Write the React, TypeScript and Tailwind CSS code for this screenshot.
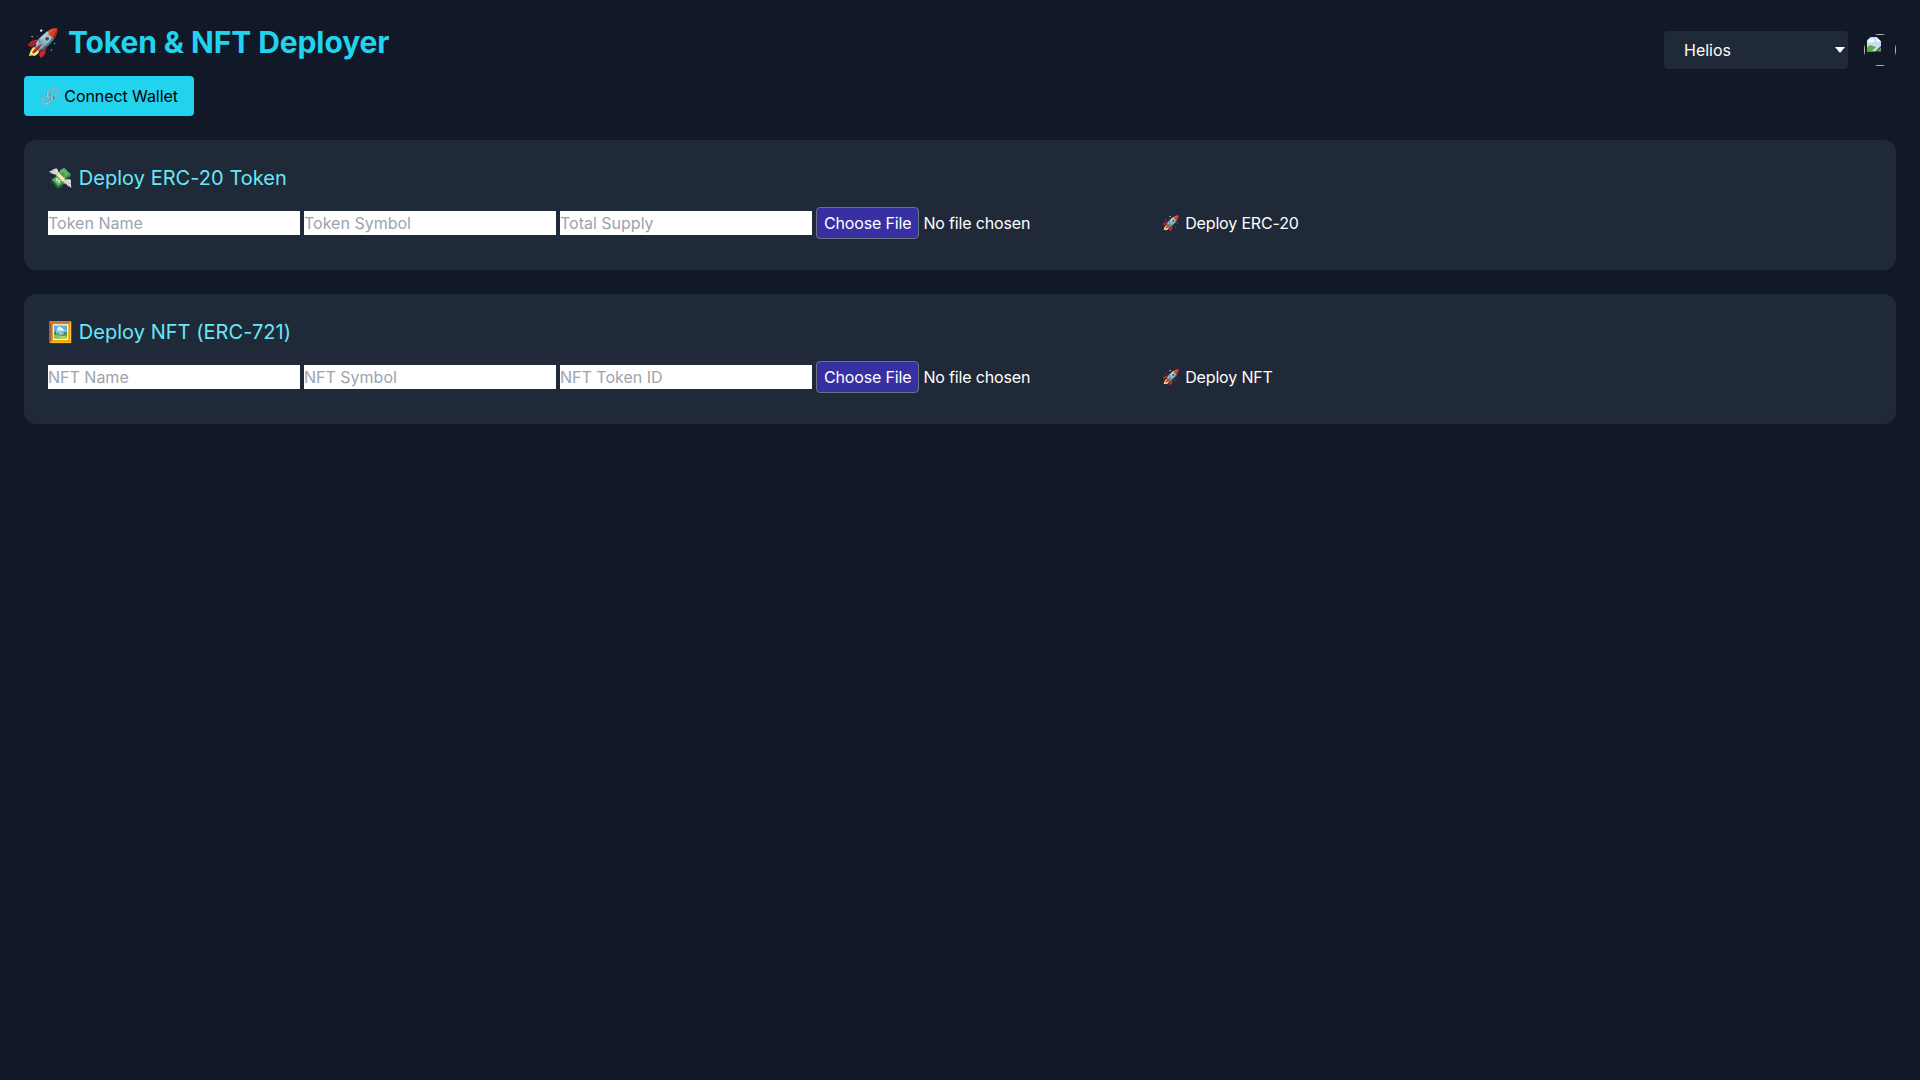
const Rocket = () => <span className="inline-block scale-90">🚀</span>;

const BrokenImage = () => (
  <div className="relative w-8 h-8 rounded-full overflow-hidden">
    <div className="absolute inset-0 border border-[#c0c0c0]"></div>
    <svg width="16" height="16" viewBox="0 0 16 16" className="absolute left-[2px] top-[2px]">
      <path d="M1 1h9.5L15 5.500V10l-5.500 5.500H1z" fill="#c9daf5" />
      <path d="M10.500 1v4.500H15z" fill="#fff" />
      <ellipse cx="5" cy="4.500" rx="3.500" ry="2" fill="#f4f7fd" />
      <path d="M1 15.500V11.500L4 9l3 1 3 1-4.500 4.500z" fill="#5fae3d" />
      <path d="M15 11v4.500h-4.500z" fill="#5fae3d" />
    </svg>
  </div>
);

const DeployCard = ({
  title,
  placeholders,
  action,
}: {
  title: string;
  placeholders: string[];
  action: string;
}) => (
  <section className="bg-[#1f2937] rounded-xl px-6 pt-6 pb-[27px] mb-6">
    <h2 className="text-xl text-[#67e8f9] tracking-[0.002em] mb-[11px]">{title}</h2>
    <div className="flex items-center gap-1">
      {placeholders.map((p) => (
        <input key={p} placeholder={p} className="w-[252px] bg-white placeholder:text-[#9ca3af] text-black" />
      ))}
      <input
        type="file"
        className="w-[325px] tracking-[-0.01em] file:bg-[#3730a3] file:text-white file:border file:border-solid file:border-[#6b7280] file:rounded file:px-[7px] file:py-[3px] file:mr-1"
      />
      <button className="px-4 py-2 text-white tracking-[-0.01em]">
        <Rocket /> {action}
      </button>
    </div>
  </section>
);

export default function App() {
  return (
    <div className="min-h-screen bg-[#111827] text-white p-6 font-['Inter',sans-serif]">
      <header className="flex justify-between items-start mb-6">
        <div>
          <h1 className="text-3xl font-bold text-[#22d3ee] tracking-[-0.003em] mb-4">
            <Rocket /> Token &amp; NFT Deployer
          </h1>
          <button className="bg-[#22d3ee] text-black tracking-[-0.005em] px-4 py-2 rounded">🔗 Connect Wallet</button>
        </div>
        <div className="flex items-center gap-4 mt-[7px]">
          <div className="relative">
            <select className="block appearance-none bg-[#1f2937] text-white rounded w-[184px] h-[38px] px-5">
              <option>Helios</option>
            </select>
            <svg width="10" height="6" viewBox="0 0 10 6" className="absolute right-[3px] top-4">
              <path d="M0 0h10L5 6z" fill="#fff" />
            </svg>
          </div>
          <BrokenImage />
        </div>
      </header>
      <DeployCard
        title="💸 Deploy ERC-20 Token"
        placeholders={['Token Name', 'Token Symbol', 'Total Supply']}
        action="Deploy ERC-20"
      />
      <DeployCard
        title="🖼️ Deploy NFT (ERC-721)"
        placeholders={['NFT Name', 'NFT Symbol', 'NFT Token ID']}
        action="Deploy NFT"
      />
    </div>
  );
}
